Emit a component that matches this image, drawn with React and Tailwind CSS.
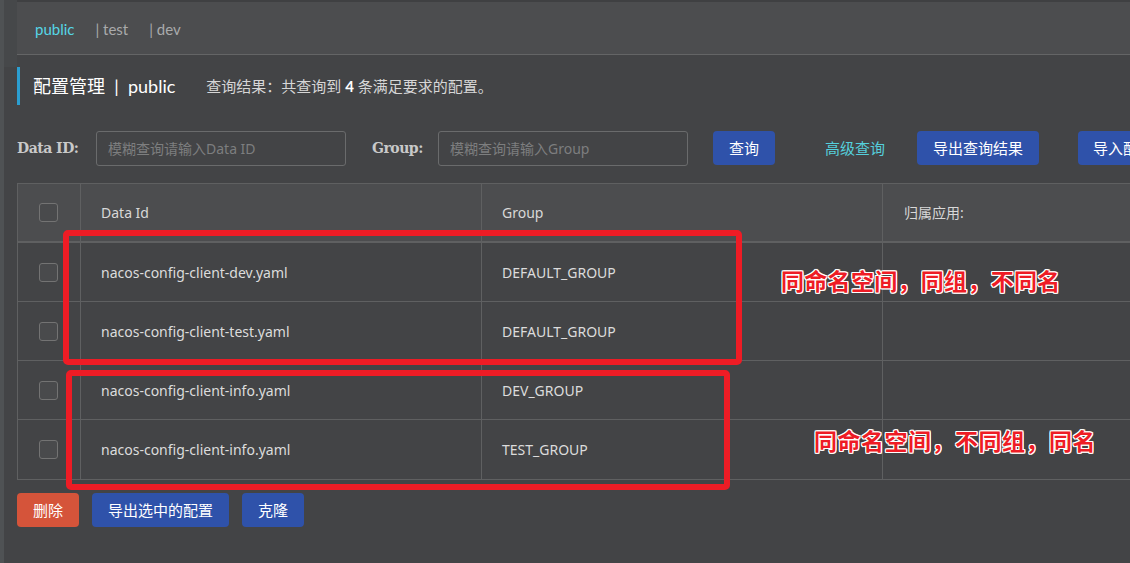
import React from "react";

const BASE = "font-['Noto_Sans','Noto_Sans_CJK_SC',sans-serif]";
const NARROW = "font-['Lato','Noto_Sans_CJK_SC',sans-serif]";
const LABEL = "font-['DejaVu_Serif','Liberation_Serif',serif]";

const ROWS = [
  { id: "nacos-config-client-dev.yaml", group: "DEFAULT_GROUP" },
  { id: "nacos-config-client-test.yaml", group: "DEFAULT_GROUP" },
  { id: "nacos-config-client-info.yaml", group: "DEV_GROUP" },
  { id: "nacos-config-client-info.yaml", group: "TEST_GROUP" },
];

const OUTLINE =
  "[text-shadow:1px_1px_0_#fff,-1px_-1px_0_#fff,1px_-1px_0_#fff,-1px_1px_0_#fff,0_1px_0_#fff,0_-1px_0_#fff,1px_0_0_#fff,-1px_0_0_#fff]";

function Checkbox() {
  return (
    <div className="w-[19px] h-[19px] rounded-[3px] border border-[#737373] bg-[#494a4c]" />
  );
}

function Btn({ children, className = "" }) {
  return (
    <div
      className={`h-[34px] flex items-center justify-center rounded-[4px] text-white text-[15px] shrink-0 whitespace-nowrap ${className}`}
    >
      {children}
    </div>
  );
}

export default function App() {
  return (
    <div
      className={`relative w-[1130px] h-[563px] overflow-hidden bg-[#434446] flex ${BASE}`}
    >
      {/* left edge strip */}
      <div className="w-[4px] h-full bg-[#4f5254] shrink-0" />
      <div className="w-[13px] shrink-0 flex flex-col">
        <div className="h-[67px] bg-[#46484a]" />
      </div>

      <div className="flex-1 min-w-0 flex flex-col overflow-hidden">
        {/* namespace tabs */}
        <div className="h-[2px] bg-[#3f4042]" />
        <div className={`h-[53px] bg-[#4c4d4f] border-b border-[#646566] flex items-center pl-[18px] text-[15px] pt-[3px] ${NARROW}`}>
          <span className="text-[#56d6e6]">public</span>
          <span className="text-[#a9aaab] ml-[21px]">|&nbsp;test</span>
          <span className="text-[#a9aaab] ml-[21px]">|&nbsp;dev</span>
        </div>

        {/* title */}
        <div className="mt-[12px] h-[38px] border-l-[3px] border-[#2b9ed0] flex items-center pl-[13px] whitespace-nowrap">
          <span className={`text-white text-[18px] ${NARROW}`}>配置管理&nbsp;&nbsp;|&nbsp;&nbsp;public</span>
          <span className={`text-[#d6d6d6] text-[15px] ml-[31px] ${NARROW}`}>
            查询结果：共查询到 <b className="font-bold text-white">4</b> 条满足要求的配置。
          </span>
        </div>

        {/* search */}
        <div className="mt-[26px] flex items-center h-[34px] whitespace-nowrap">
          <span className={`shrink-0 text-[#c9c9c9] text-[14px] font-bold w-[79px] tracking-[-0.5px] ${LABEL}`}>
            Data ID:
          </span>
          <div className="shrink-0 w-[250px] h-[35px] rounded-[3px] border border-[#6a6b6c] flex items-center px-[11px] text-[14px] text-[#7d7e7f]">
            模糊查询请输入Data ID
          </div>
          <span className={`shrink-0 text-[#c9c9c9] text-[14px] font-bold ml-[26px] w-[66px] tracking-[-0.5px] ${LABEL}`}>
            Group:
          </span>
          <div className="shrink-0 w-[250px] h-[35px] rounded-[3px] border border-[#6a6b6c] flex items-center px-[11px] text-[14px] text-[#7d7e7f]">
            模糊查询请输入Group
          </div>
          <Btn className="ml-[25px] w-[62px] bg-[#2f52aa]">查询</Btn>
          <span className="shrink-0 ml-[50px] text-[15px] text-[#55cfdc]">高级查询</span>
          <Btn className="ml-[32px] w-[122px] bg-[#2f52aa]">导出查询结果</Btn>
          <Btn className="ml-[39px] w-[122px] bg-[#2f52aa] justify-start pl-[15px]">导入配置</Btn>
        </div>

        {/* config table */}
        <div className="mt-[18px] w-[1300px] border-l border-b border-[#5f6061] text-[14px]">
          <div className="grid grid-cols-[63px_401px_401px_1fr] h-[60px] bg-[#4c4d4f] border-t border-b-2 border-[#5f6061] text-[#d8d8d8]">
            <div className="flex items-center justify-center border-r border-[#5f6061] pr-[1px]">
              <Checkbox />
            </div>
            <div className="flex items-center pl-[20px] border-r border-[#5f6061]">Data Id</div>
            <div className="flex items-center pl-[20px] border-r border-[#5f6061]">Group</div>
            <div className="flex items-center pl-[21px]">归属应用:</div>
          </div>
          {ROWS.map((r, i) => (
            <div
              key={i}
              className={`grid grid-cols-[63px_401px_401px_1fr] h-[59px] text-[#dcdcdc] ${
                i < ROWS.length - 1 ? "border-b border-[#5f6061]" : ""
              }`}
            >
              <div className="flex items-center justify-center border-r border-[#5f6061] pr-[1px]">
                <Checkbox />
              </div>
              <div className="flex items-center pl-[20px] border-r border-[#5f6061]">{r.id}</div>
              <div className="flex items-center pl-[20px] border-r border-[#5f6061]">{r.group}</div>
              <div />
            </div>
          ))}
        </div>

        {/* bottom actions */}
        <div className="mt-[13px] flex items-center">
          <Btn className="w-[62px] bg-[#d5543a]">删除</Btn>
          <Btn className="ml-[13px] w-[137px] bg-[#2f52aa]">导出选中的配置</Btn>
          <Btn className="ml-[13px] w-[62px] bg-[#2f52aa]">克隆</Btn>
        </div>
      </div>

      {/* red annotation overlays */}
      <div className="absolute left-[63px] top-[230px] w-[679px] h-[135px] border-[6px] border-[#ee1c25] rounded-[5px]" />
      <div className="absolute left-[66px] top-[370px] w-[664px] h-[120px] border-[6px] border-[#ee1c25] rounded-[5px]" />
      <div className={`absolute left-[781px] top-[265px] text-[23px] leading-[30px] font-bold text-[#ee1c25] tracking-[0.3px] font-['Noto_Sans_CJK_SC',sans-serif] ${OUTLINE}`}>
        同命名空间，同组，不同名
      </div>
      <div className={`absolute left-[814px] top-[425px] text-[23px] leading-[30px] font-bold text-[#ee1c25] tracking-[0.5px] font-['Noto_Sans_CJK_SC',sans-serif] ${OUTLINE}`}>
        同命名空间，不同组，同名
      </div>
    </div>
  );
}
